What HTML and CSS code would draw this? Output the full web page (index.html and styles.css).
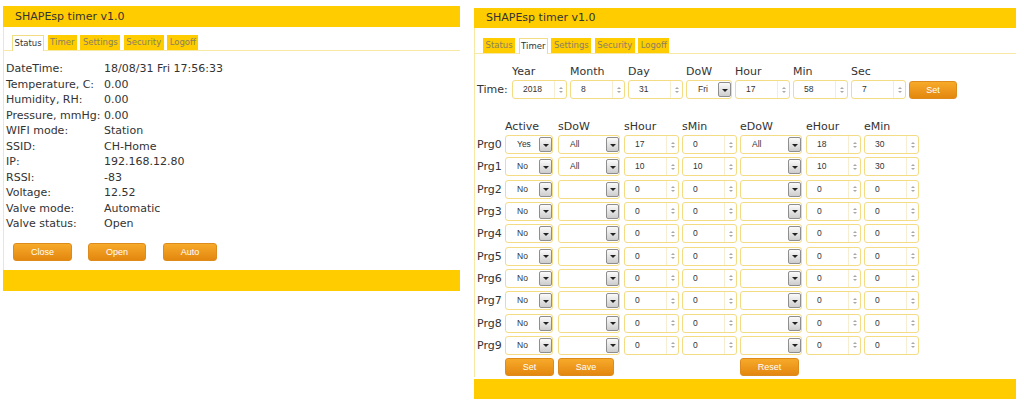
FILE: index.html
```html
<!DOCTYPE html>
<html>
<head>
<meta charset="utf-8">
<link rel="stylesheet" href="styles.css">
</head>
<body>
<div class="panel panel-left">
  <div class="hdr">SHAPEsp timer v1.0</div>
  <div class="body">
    <div class="tabs">
      <div class="tab active">Status</div>
      <div class="tab">Timer</div>
      <div class="tab">Settings</div>
      <div class="tab">Security</div>
      <div class="tab">Logoff</div>
    </div>
    <div class="status">
      <div>DateTime:</div><div>18/08/31 Fri 17:56:33</div>
      <div>Temperature, C:</div><div>0.00</div>
      <div>Humidity, RH:</div><div>0.00</div>
      <div>Pressure, mmHg:</div><div>0.00</div>
      <div>WIFI mode:</div><div>Station</div>
      <div>SSID:</div><div>CH-Home</div>
      <div>IP:</div><div>192.168.12.80</div>
      <div>RSSI:</div><div>-83</div>
      <div>Voltage:</div><div>12.52</div>
      <div>Valve mode:</div><div>Automatic</div>
      <div>Valve status:</div><div>Open</div>
    </div>
    <div class="actions">
      <div class="btn w-close">Close</div>
      <div class="btn w-open">Open</div>
      <div class="btn w-auto">Auto</div>
    </div>
  </div>
  <div class="ftr ftr-left"></div>
</div>

<div class="panel panel-right">
  <div class="hdr">SHAPEsp timer v1.0</div>
  <div class="body body-right">
    <div class="tabs">
      <div class="tab">Status</div>
      <div class="tab active">Timer</div>
      <div class="tab">Settings</div>
      <div class="tab">Security</div>
      <div class="tab">Logoff</div>
    </div>
    <div class="timer">
      <div class="trow">
        <div></div><div class="lbl">Year</div><div class="lbl">Month</div><div class="lbl">Day</div><div class="lbl">DoW</div><div class="lbl">Hour</div><div class="lbl">Min</div><div class="lbl">Sec</div><div></div>
        <div class="rlbl">Time:</div>
        <div class="num"><span class="val">2018</span><span class="spin"></span></div>
        <div class="num"><span class="val">8</span><span class="spin"></span></div>
        <div class="num"><span class="val">31</span><span class="spin"></span></div>
        <div class="sel"><span class="val">Fri</span><span class="dd"></span></div>
        <div class="num"><span class="val">17</span><span class="spin"></span></div>
        <div class="num"><span class="val">58</span><span class="spin"></span></div>
        <div class="num"><span class="val">7</span><span class="spin"></span></div>
        <div class="btn btn-tset">Set</div>
      </div>

      <div class="prog-head">
        <div></div><div>Active</div><div>sDoW</div><div>sHour</div><div>sMin</div><div>eDoW</div><div>eHour</div><div>eMin</div>
      </div>

      <div class="prog">
        <div class="rlbl">Prg0</div>
        <div class="sel s-act"><span class="val">Yes</span><span class="dd"></span></div>
        <div class="sel s-dow"><span class="val">All</span><span class="dd"></span></div>
        <div class="num"><span class="val">17</span><span class="spin"></span></div>
        <div class="num"><span class="val">0</span><span class="spin"></span></div>
        <div class="sel s-dow"><span class="val">All</span><span class="dd"></span></div>
        <div class="num"><span class="val">18</span><span class="spin"></span></div>
        <div class="num"><span class="val">30</span><span class="spin"></span></div>

        <div class="rlbl">Prg1</div>
        <div class="sel s-act"><span class="val">No</span><span class="dd"></span></div>
        <div class="sel s-dow"><span class="val">All</span><span class="dd"></span></div>
        <div class="num"><span class="val">10</span><span class="spin"></span></div>
        <div class="num"><span class="val">10</span><span class="spin"></span></div>
        <div class="sel s-dow"><span class="val"></span><span class="dd"></span></div>
        <div class="num"><span class="val">10</span><span class="spin"></span></div>
        <div class="num"><span class="val">30</span><span class="spin"></span></div>

        <div class="rlbl">Prg2</div>
        <div class="sel s-act"><span class="val">No</span><span class="dd"></span></div>
        <div class="sel s-dow"><span class="val"></span><span class="dd"></span></div>
        <div class="num"><span class="val">0</span><span class="spin"></span></div>
        <div class="num"><span class="val">0</span><span class="spin"></span></div>
        <div class="sel s-dow"><span class="val"></span><span class="dd"></span></div>
        <div class="num"><span class="val">0</span><span class="spin"></span></div>
        <div class="num"><span class="val">0</span><span class="spin"></span></div>

        <div class="rlbl">Prg3</div>
        <div class="sel s-act"><span class="val">No</span><span class="dd"></span></div>
        <div class="sel s-dow"><span class="val"></span><span class="dd"></span></div>
        <div class="num"><span class="val">0</span><span class="spin"></span></div>
        <div class="num"><span class="val">0</span><span class="spin"></span></div>
        <div class="sel s-dow"><span class="val"></span><span class="dd"></span></div>
        <div class="num"><span class="val">0</span><span class="spin"></span></div>
        <div class="num"><span class="val">0</span><span class="spin"></span></div>

        <div class="rlbl">Prg4</div>
        <div class="sel s-act"><span class="val">No</span><span class="dd"></span></div>
        <div class="sel s-dow"><span class="val"></span><span class="dd"></span></div>
        <div class="num"><span class="val">0</span><span class="spin"></span></div>
        <div class="num"><span class="val">0</span><span class="spin"></span></div>
        <div class="sel s-dow"><span class="val"></span><span class="dd"></span></div>
        <div class="num"><span class="val">0</span><span class="spin"></span></div>
        <div class="num"><span class="val">0</span><span class="spin"></span></div>

        <div class="rlbl">Prg5</div>
        <div class="sel s-act"><span class="val">No</span><span class="dd"></span></div>
        <div class="sel s-dow"><span class="val"></span><span class="dd"></span></div>
        <div class="num"><span class="val">0</span><span class="spin"></span></div>
        <div class="num"><span class="val">0</span><span class="spin"></span></div>
        <div class="sel s-dow"><span class="val"></span><span class="dd"></span></div>
        <div class="num"><span class="val">0</span><span class="spin"></span></div>
        <div class="num"><span class="val">0</span><span class="spin"></span></div>

        <div class="rlbl">Prg6</div>
        <div class="sel s-act"><span class="val">No</span><span class="dd"></span></div>
        <div class="sel s-dow"><span class="val"></span><span class="dd"></span></div>
        <div class="num"><span class="val">0</span><span class="spin"></span></div>
        <div class="num"><span class="val">0</span><span class="spin"></span></div>
        <div class="sel s-dow"><span class="val"></span><span class="dd"></span></div>
        <div class="num"><span class="val">0</span><span class="spin"></span></div>
        <div class="num"><span class="val">0</span><span class="spin"></span></div>

        <div class="rlbl">Prg7</div>
        <div class="sel s-act"><span class="val">No</span><span class="dd"></span></div>
        <div class="sel s-dow"><span class="val"></span><span class="dd"></span></div>
        <div class="num"><span class="val">0</span><span class="spin"></span></div>
        <div class="num"><span class="val">0</span><span class="spin"></span></div>
        <div class="sel s-dow"><span class="val"></span><span class="dd"></span></div>
        <div class="num"><span class="val">0</span><span class="spin"></span></div>
        <div class="num"><span class="val">0</span><span class="spin"></span></div>

        <div class="rlbl">Prg8</div>
        <div class="sel s-act"><span class="val">No</span><span class="dd"></span></div>
        <div class="sel s-dow"><span class="val"></span><span class="dd"></span></div>
        <div class="num"><span class="val">0</span><span class="spin"></span></div>
        <div class="num"><span class="val">0</span><span class="spin"></span></div>
        <div class="sel s-dow"><span class="val"></span><span class="dd"></span></div>
        <div class="num"><span class="val">0</span><span class="spin"></span></div>
        <div class="num"><span class="val">0</span><span class="spin"></span></div>

        <div class="rlbl">Prg9</div>
        <div class="sel s-act"><span class="val">No</span><span class="dd"></span></div>
        <div class="sel s-dow"><span class="val"></span><span class="dd"></span></div>
        <div class="num"><span class="val">0</span><span class="spin"></span></div>
        <div class="num"><span class="val">0</span><span class="spin"></span></div>
        <div class="sel s-dow"><span class="val"></span><span class="dd"></span></div>
        <div class="num"><span class="val">0</span><span class="spin"></span></div>
        <div class="num"><span class="val">0</span><span class="spin"></span></div>

        <div class="btn b-set">Set</div>
        <div class="btn b-save">Save</div>
        <div class="btn b-reset">Reset</div>
      </div>
    </div>
  </div>
  <div class="ftr ftr-right"></div>
</div>
</body>
</html>
```

FILE: styles.css
```css
* { box-sizing: border-box; }

body {
  margin: 0;
  background: #fff;
  font-family: "DejaVu Sans", Verdana, sans-serif;
  color: #333;
  display: flex;
  align-items: flex-start;
}

.panel { display: flex; flex-direction: column; }
.panel-left { margin: 6px 0 0 3px; width: 457px; }
.panel-right { margin: 8px 0 0 14px; width: 542px; }

.hdr {
  background: #ffcc00;
  font-size: 11px;
  padding-left: 12px;
  color: #333;
}
.panel-left .hdr { height: 21px; line-height: 21px; }
.panel-right .hdr { height: 20px; line-height: 20px; }

.body { border-left: 1px solid #f8e8a6; }

.tabs {
  display: flex;
  gap: 3.5px;
  padding-left: 8px;
  border-bottom: 1px solid #f8e8a6;
}
.panel-left .tabs { padding-top: 8px; }
.panel-right .tabs { padding-top: 10px; }

.tab {
  height: 15px;
  line-height: 15px;
  padding: 0 2.5px;
  background: #ffcc00;
  color: #8a8160;
  font-size: 8.5px;
}
.tab.active {
  background: #fff;
  color: #333;
  border: 1px solid #f3dc86;
  border-bottom: none;
  height: 16px;
  margin-bottom: -1px;
  padding: 0 1.5px;
  line-height: 15px;
}

.status {
  display: grid;
  grid-template-columns: 98px auto;
  font-size: 11px;
  line-height: 15.5px;
  padding: 10px 0 0 2px;
}

.actions {
  display: flex;
  padding: 11.5px 0 9px 9px;
}

.btn {
  height: 18px;
  line-height: 16px;
  text-align: center;
  color: #fff;
  font-family: "Liberation Sans", Arial, sans-serif;
  font-size: 9px;
  background: linear-gradient(#f7aa2a, #e3870f);
  border: 1px solid #de8b1e;
  border-radius: 3px;
}
.w-close { width: 59px; }
.w-open { width: 58px; margin-left: 16px; }
.w-auto { width: 54px; margin-left: 17px; }

.ftr { background: #ffcc00; }
.ftr-left { height: 21px; }
.ftr-right { height: 20px; margin-top: 1.5px; }

/* Timer tab */
.timer { padding: 11px 0 0 2px; font-size: 11px; }

.trow {
  display: grid;
  grid-template-columns: 32px 55px 55px 55px 46px 55px 55px 55px 48px;
  grid-template-rows: 14px 19px;
  column-gap: 3px;
  row-gap: 1px;
}
.lbl { line-height: 14px; }
.rlbl { line-height: 19px; white-space: nowrap; }

.btn-tset { margin-top: 1px; }

.num, .sel {
  display: flex;
  height: 19px;
  background: #fff;
  border: 1px solid #f4dc85;
  border-radius: 3px;
  font-family: "Liberation Sans", Arial, sans-serif;
  font-size: 8.5px;
  color: #333;
}
.num .val { flex: 1; padding-left: 10px; line-height: 17px; }
.sel .val { flex: 1; padding-left: 11px; line-height: 17px; }

.spin {
  width: 12px;
  border-left: 1px solid #f6eed2;
  display: flex;
  flex-direction: column;
  align-items: center;
  justify-content: center;
  gap: 2px;
}
.spin::before, .spin::after {
  content: "";
  width: 0;
  height: 0;
  border-left: 2px solid transparent;
  border-right: 2px solid transparent;
}
.spin::before { border-bottom: 2px solid #a8a8a8; }
.spin::after { border-top: 2px solid #a8a8a8; }

.dd {
  width: 13px;
  margin: 1px 0 1px 0;
  background: linear-gradient(#fbfbfb, #cdcdcd);
  border: 1px solid #8e8e8e;
  border-radius: 2px;
  display: flex;
  align-items: center;
  justify-content: center;
}
.dd::after {
  content: "";
  width: 0;
  height: 0;
  border-left: 3px solid transparent;
  border-right: 3px solid transparent;
  border-top: 3px solid #222;
  margin-top: 1px;
}

.s-act { width: 48px; }
.s-dow { width: 62px; }

.prog-head, .prog {
  display: grid;
  grid-template-columns: 25px 50px 63px 55px 55px 63px 55px 55px;
  column-gap: 3px;
}
.prog-head {
  margin-top: 20.5px;
  height: 14px;
  line-height: 14px;
}
.prog {
  margin-top: 1.5px;
  grid-auto-rows: 19px;
  row-gap: 3.33px;
}

.b-set { grid-column: 2; width: 49px; }
.b-save { grid-column: 3; width: 56px; }
.b-reset { grid-column: 6; width: 59px; }
```
